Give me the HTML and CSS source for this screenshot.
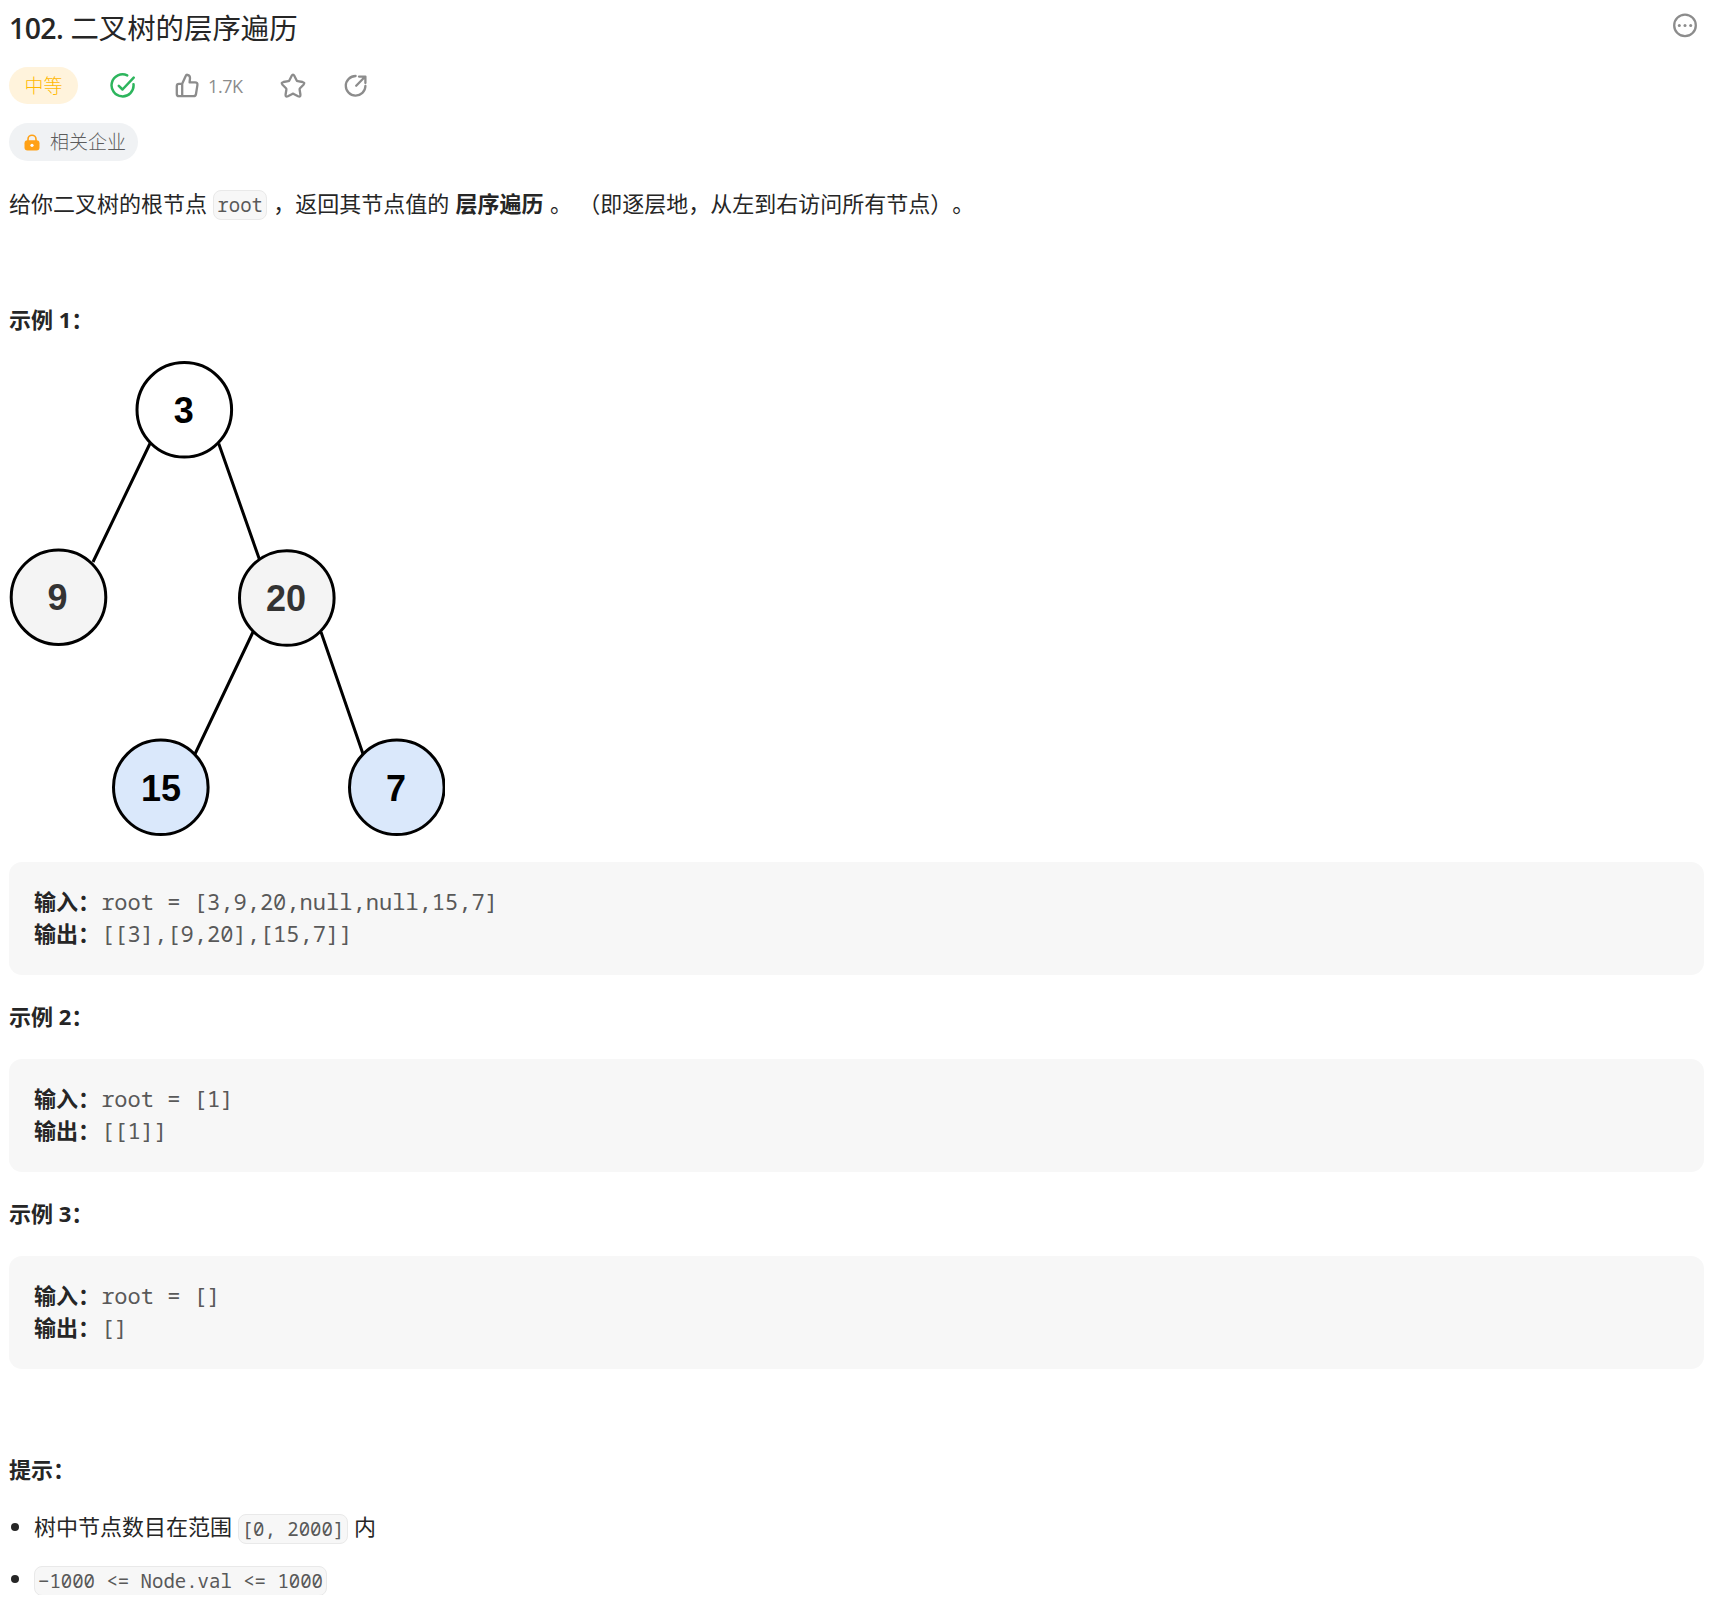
FILE: index.html
```html
<!DOCTYPE html>
<html lang="zh-CN">
<head>
<meta charset="utf-8">
<title>102. 二叉树的层序遍历</title>
<link rel="stylesheet" href="styles.css">
</head>
<body>
<main class="problem">
  <header class="header">
    <h1 class="title"><span class="title-number">102.</span> 二叉树的层序遍历</h1>
    <svg class="more" width="26" height="26" viewBox="0 0 26 26"><circle cx="13" cy="13.4" r="10.8" fill="none" stroke="#8c8c8c" stroke-width="2.3"/><g fill="#8c8c8c"><circle cx="7.3" cy="13.4" r="1.5"/><circle cx="13" cy="13.4" r="1.5"/><circle cx="18.7" cy="13.4" r="1.5"/></g></svg>
  </header>

  <div class="toolbar">
    <span class="difficulty">中等</span>
    <svg class="icon solved" width="26" height="26" viewBox="0 0 26 26"><path d="M17.2 2.4A11 11 0 1 0 23.5 11.2M8.8 12.8l3.7 3.7L23.7 4.6"/></svg>
    <svg class="icon like" width="24" height="26" viewBox="0 0 24 26"><path d="M7.2 10.8L10.8 2.8Q11.3 1.6 12.4 1.8Q15.2 2.4 15 5.2L14.6 9.4H20Q22.8 9.4 22.4 12.2L21 21Q20.6 23.2 18.4 23.2H4Q1.8 23.2 1.8 21V13Q1.8 10.8 4 10.8ZM7.2 10.8V23.2"/></svg>
    <span class="like-count">1.7K</span>
    <svg class="icon star" width="26" height="26" viewBox="0 0 26 26"><path d="M11.6 2.9Q13 0.5 14.4 2.9L16.7 7.5Q17 8.1 17.7 8.2L22.6 9Q25.4 9.6 23.5 11.7L20 15.3Q19.5 15.8 19.6 16.5L20.4 21.5Q20.7 24.4 18.1 23.2L13.7 20.9Q13 20.6 12.3 20.9L7.9 23.2Q5.3 24.4 5.6 21.5L6.4 16.5Q6.5 15.8 6 15.3L2.5 11.7Q.6 9.6 3.4 9L8.3 8.2Q9 8.1 9.3 7.5Z"/></svg>
    <svg class="icon share" width="26" height="26" viewBox="0 0 26 26"><path d="M12.6 3A9.8 9.8 0 1 0 22.4 13M13.2 12.8L22 3.8M16 3.6H22.4V10"/></svg>
  </div>

  <div class="tags">
    <span class="company">
      <svg width="16" height="18" viewBox="0 0 16 18"><path d="M4 9V6.2a4 4 0 0 1 8 0V9" fill="none" stroke="#ffa116" stroke-width="1.6"/><rect x=".5" y="7.2" width="15" height="10.3" rx="3" fill="#ffa116"/><circle cx="8" cy="12.3" r="1.6" fill="#fff"/></svg>
      相关企业
    </span>
  </div>

  <p class="statement">给你二叉树的根节点 <code class="code">root</code> ，返回其节点值的 <strong>层序遍历</strong> 。 （即逐层地，从左到右访问所有节点）。</p>

  <p class="heading heading-far">示例 1：</p>
  <svg class="tree" width="436" height="476" viewBox="9 361 436 476">
    <g stroke="#000" stroke-width="3">
      <path d="M150 443.5L93 562M218.7 443.5L259.3 559M253 632L195 754M321 632L363 754"/>
      <circle cx="184.3" cy="409.8" r="47.3" fill="#fff"/>
      <circle cx="58.5" cy="597.2" r="47.3" fill="#f4f4f4"/>
      <circle cx="286.8" cy="598" r="47.3" fill="#f4f4f4"/>
      <circle cx="160.8" cy="787.3" r="47.3" fill="#dae8fb"/>
      <circle cx="396.8" cy="787.3" r="47.3" fill="#dae8fb"/>
    </g>
    <g class="tree-label">
      <text x="183.7" y="423.3">3</text>
      <text class="muted" x="57.5" y="609.6">9</text>
      <text class="muted" x="286" y="611">20</text>
      <text x="161" y="800.5">15</text>
      <text x="396" y="800.5">7</text>
    </g>
  </svg>
  <pre class="example"><strong>输入：</strong>root = [3,9,20,null,null,15,7]
<strong>输出：</strong>[[3],[9,20],[15,7]]</pre>

  <p class="heading">示例 2：</p>
  <pre class="example"><strong>输入：</strong>root = [1]
<strong>输出：</strong>[[1]]</pre>

  <p class="heading">示例 3：</p>
  <pre class="example"><strong>输入：</strong>root = []
<strong>输出：</strong>[]</pre>

  <p class="heading heading-far">提示：</p>
  <ul class="hints">
    <li><span>树中节点数目在范围 <code class="code">[0, 2000]</code> 内</span></li>
    <li><span><code class="code">−1000 &lt;= Node.val &lt;= 1000</code></span></li>
  </ul>
</main>
</body>
</html>
```
FILE: styles.css
```css
* {
  box-sizing: border-box;
}

body {
  margin: 0;
  background: #fff;
  color: #262626;
  font-family: "Open Sans", "Noto Sans CJK SC", sans-serif;
  font-size: 22px;
  line-height: 32px;
  text-spacing-trim: space-all;
}

.problem {
  padding: 12px 14px 0 9px;
}

.header {
  display: flex;
  justify-content: space-between;
  height: 32px;
}

.title {
  margin: 0;
  font-size: 28.4px;
  font-weight: 400;
  line-height: 32px;
}

.title-number {
  font-weight: 600;
  letter-spacing: -0.6px;
}

.more {
  margin-right: 6px;
}

.toolbar {
  display: flex;
  align-items: center;
  height: 37px;
  margin-top: 23px;
}

.difficulty {
  width: 69px;
  height: 37px;
  border-radius: 19px;
  background: #fff3dc;
  color: #ffb800;
  font-size: 18.9px;
  font-weight: 300;
  line-height: 38px;
  text-align: center;
}

.icon {
  flex: none;
  fill: none;
  stroke: #8c8c8c;
  stroke-width: 2.3;
  stroke-linecap: round;
  stroke-linejoin: round;
}

.solved {
  margin-left: 32px;
  stroke: #2db55d;
  stroke-width: 2.5;
}

.like {
  margin-left: 39px;
}

.like-count {
  width: 35px;
  margin-left: 9px;
  color: #8c8c8c;
  font-size: 18px;
  letter-spacing: -0.4px;
}

.star {
  margin-left: 37px;
}

.share {
  margin-left: 37px;
}

.tags {
  display: flex;
  margin-top: 19px;
}

.company {
  display: flex;
  align-items: center;
  gap: 10px;
  width: 129px;
  height: 38px;
  padding-left: 15px;
  border-radius: 19px;
  background: #f0f2f4;
  color: #5c5c5c;
  font-size: 19px;
  font-weight: 300;
  white-space: nowrap;
}

.statement {
  height: 32px;
  margin: 26px 0 0;
  word-spacing: 0.6px;
}

strong {
  color: #262626;
  font-weight: 700;
}

.code {
  display: inline-block;
  height: 30px;
  padding: 0 3px;
  border: 1px solid #e9e9e9;
  border-radius: 8px;
  background: #f7f7f7;
  color: #595959;
  font-family: "Noto Sans Mono", "DejaVu Sans Mono", monospace;
  font-size: 19px;
  line-height: 28px;
  vertical-align: middle;
  word-spacing: 0;
}

.statement .code {
  margin-top: -3px;
}

.heading {
  height: 32px;
  margin: 25px 0 27px;
  font-weight: 700;
}

.heading-far {
  margin: 84px 0 26px;
}

.tree {
  display: block;
  margin-bottom: 25px;
}

.tree-label {
  fill: #000;
  font: 700 36px "Liberation Sans", Arial, sans-serif;
  text-anchor: middle;
}

.muted {
  fill: #333;
}

.example {
  height: 113px;
  margin: 0;
  padding: 23px 25px;
  border-radius: 13px;
  background: #f7f7f7;
  color: #595959;
  font-family: "Noto Sans Mono", "DejaVu Sans Mono", "Noto Sans CJK SC", monospace;
  font-size: 22.05px;
  line-height: 31.4px;
}

.example strong {
  margin-right: 1px;
  font-family: "Noto Sans CJK SC", sans-serif;
}

.hints {
  display: flex;
  flex-direction: column;
  gap: 20px;
  margin: 0;
  padding: 0 0 0 2px;
  list-style: none;
}

.hints li {
  display: flex;
  align-items: center;
  gap: 15px;
  height: 32px;
}

.hints li::before {
  content: "";
  width: 8px;
  height: 8px;
  border-radius: 50%;
  background: #262626;
}
```
